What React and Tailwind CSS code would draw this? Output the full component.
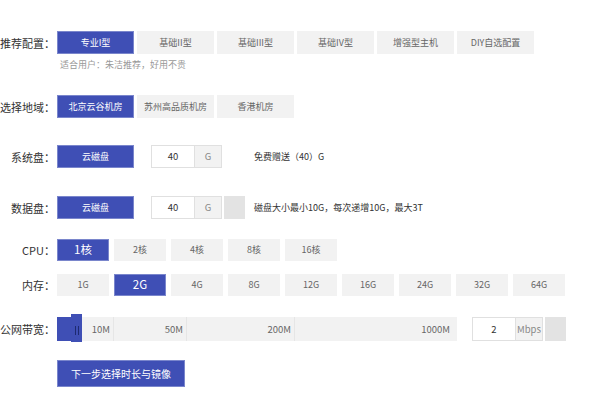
import React from "react";

const BLUE = "bg-[#3f4fb5] border border-[#7a86cc] text-white";
const GRAY = "bg-[#f2f2f2] border border-[#f2f2f2] text-[#666]";

function Label({ children }) {
  return (
    <div className="w-[55px] mr-[2px] shrink-0 text-right text-[11px] text-[#333] leading-[16px] whitespace-nowrap">
      {children}
    </div>
  );
}

function Btn({ active, children, w = "w-[77px]", big }) {
  return (
    <div
      className={`${w} h-full flex items-center justify-center box-border whitespace-nowrap ${active ? BLUE : GRAY} ${
        active && big ? "text-[11.5px]" : "text-[9px]"
      }`}
    >
      {children}
    </div>
  );
}

export default function App() {
  const types = ["专业I型", "基础II型", "基础III型", "基础IV型", "增强型主机", "DIY自选配置"];
  const regions = ["北京云谷机房", "苏州高品质机房", "香港机房"];
  const cpus = ["1核", "2核", "4核", "8核", "16核"];
  const mems = ["1G", "2G", "4G", "8G", "12G", "16G", "24G", "32G", "64G"];
  return (
    <div className="w-[600px] h-[400px] bg-white overflow-hidden font-['Noto_Sans_CJK_SC','Noto_Sans',sans-serif] flex flex-col pt-[31px]">
      {/* 推荐配置 */}
      <div className="flex items-center h-[23px]">
        <Label>推荐配置：</Label>
        <div className="flex gap-[3px] h-full">
          {types.map((t, i) => (
            <Btn key={t} active={i === 0}>
              {t}
            </Btn>
          ))}
        </div>
      </div>
      <div className="mt-[3px] pl-[60px] text-[9px] leading-[16px] text-[#999]">
        适合用户：朱洁推荐，好用不贵
      </div>

      {/* 选择地域 */}
      <div className="flex items-center h-[23px] mt-[22px]">
        <Label>选择地域：</Label>
        <div className="flex gap-[3px] h-full">
          {regions.map((t, i) => (
            <Btn key={t} active={i === 0}>
              {t}
            </Btn>
          ))}
        </div>
      </div>

      {/* 系统盘 */}
      <div className="flex items-center h-[23px] mt-[27px]">
        <Label>系统盘：</Label>
        <Btn active>云磁盘</Btn>
        <div className="ml-[17px] flex h-full border border-[#e0e0e0]">
          <div className="w-[42px] bg-white flex items-center justify-center text-[9.5px] text-[#333]">40</div>
          <div className="w-[27px] bg-[#f2f2f2] border-l border-[#e0e0e0] flex items-center justify-center text-[9.5px] text-[#888]">
            G
          </div>
        </div>
        <div className="ml-[32px] text-[9px] text-[#333]">免费赠送（40）G</div>
      </div>

      {/* 数据盘 */}
      <div className="flex items-center h-[23px] mt-[28px]">
        <Label>数据盘：</Label>
        <Btn active>云磁盘</Btn>
        <div className="ml-[17px] flex h-full border border-[#e0e0e0]">
          <div className="w-[42px] bg-white flex items-center justify-center text-[9.5px] text-[#333]">40</div>
          <div className="w-[27px] bg-[#f2f2f2] border-l border-[#e0e0e0] flex items-center justify-center text-[9.5px] text-[#888]">
            G
          </div>
        </div>
        <div className="ml-[2px] w-[21px] h-full bg-[#e3e3e3]" />
        <div className="ml-[9px] text-[9px] text-[#333]">磁盘大小最小10G，每次递增10G，最大3T</div>
      </div>

      {/* CPU */}
      <div className="flex items-center h-[22px] mt-[20px]">
        <Label>CPU：</Label>
        <div className="flex gap-[5px] h-full">
          {cpus.map((t, i) => (
            <Btn key={t} active={i === 0} w="w-[52px]" big>
              {t}
            </Btn>
          ))}
        </div>
      </div>

      {/* 内存 */}
      <div className="flex items-center h-[22px] mt-[13px]">
        <Label>内存：</Label>
        <div className="flex gap-[5px] h-full">
          {mems.map((t, i) => (
            <Btn key={t} active={i === 1} w="w-[52px]" big>
              {t}
            </Btn>
          ))}
        </div>
      </div>

      {/* 公网带宽 */}
      <div className="flex items-center h-[24px] mt-[21px]">
        <Label>公网带宽：</Label>
        <div className="flex h-full w-[400px] bg-[#f2f2f2] text-[9.5px] text-[#666]">
          <div className="w-[14px] h-full bg-[#3f4fb5]" />
          <div className="w-[11px] h-[28px] -mt-[3px] bg-[#3f4fb5] flex items-center justify-center gap-[2px] pt-[4px]">
            <div className="w-px h-[9px] bg-[#1e2a70]" />
            <div className="w-px h-[9px] bg-[#1e2a70]" />
          </div>
          <div className="w-[32px] h-full flex items-center justify-end pr-[3px] border-r border-[#e6e6e6]">10M</div>
          <div className="w-[73px] h-full flex items-center justify-end pr-[3px] border-r border-[#e6e6e6]">50M</div>
          <div className="w-[108px] h-full flex items-center justify-end pr-[3px] border-r border-[#e6e6e6]">200M</div>
          <div className="flex-1 h-full flex items-center justify-end pr-[7px]">1000M</div>
        </div>
        <div className="ml-[15px] flex h-full border border-[#e0e0e0]">
          <div className="w-[42px] bg-white flex items-center justify-center text-[9.5px] text-[#333]">2</div>
          <div className="w-[27px] bg-[#f2f2f2] border-l border-[#e0e0e0] flex items-center justify-center text-[9.5px] text-[#888]">
            Mbps
          </div>
        </div>
        <div className="ml-[2px] w-[21px] h-full bg-[#e3e3e3]" />
      </div>

      {/* 下一步 */}
      <div className="flex mt-[19px] pl-[57px]">
        <div className={`w-[128px] h-[27px] flex items-center justify-center text-[10px] whitespace-nowrap ${BLUE}`}>
          下一步选择时长与镜像
        </div>
      </div>
    </div>
  );
}
